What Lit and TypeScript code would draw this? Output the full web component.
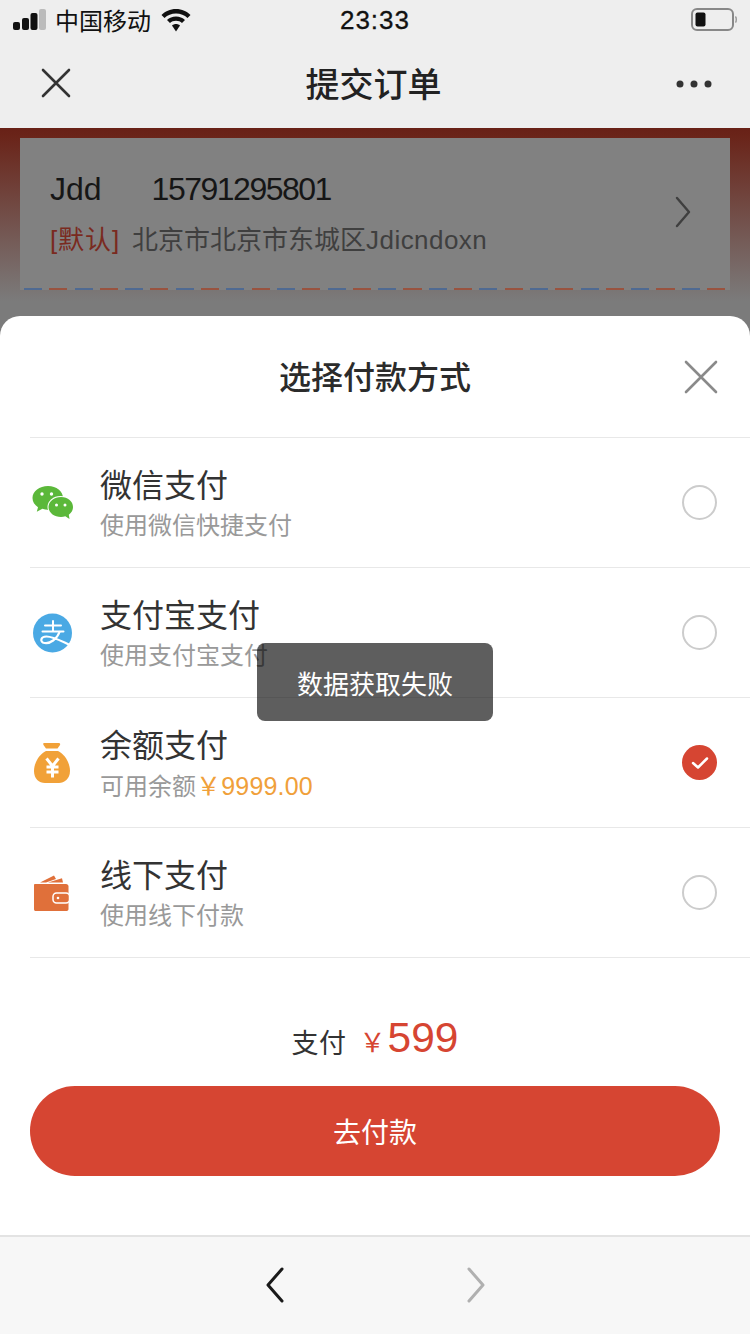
import { LitElement, html, css, svg } from "lit";
import { customElement } from "lit/decorators.js";

const rows = [
  { key: "wx", title: "微信支付", sub: "使用微信快捷支付", on: false },
  { key: "ali", title: "支付宝支付", sub: "使用支付宝支付", on: false },
  { key: "bal", title: "余额支付", sub: "可用余额", amount: "￥9999.00", on: true },
  { key: "off", title: "线下支付", sub: "使用线下付款", on: false },
];

const icons: Record<string, unknown> = {
  wx: html`<svg width="44" height="36" viewBox="0 0 44 36">
    <path fill="#5bb83a" d="M18 1C9.500 1 2.500 6.400 2.500 13c0 3.700 2.100 7 5.500 9.200L6.800 26.800 12.400 23.800C14.200 24.500 16 24.800 18 24.800 26.500 24.800 33 19.500 33 13 33 6.400 26.500 1 18 1Z"/>
    <ellipse cx="30.500" cy="22" rx="13" ry="11" fill="#fff"/>
    <path fill="#5bb83a" d="M31 12C24 12 18.500 16.500 18.500 22S24 32 31 32C32.500 32 34 31.800 35.300 31.300L39.500 34 38.800 29.800C41.500 27.800 43 25 43 22 43 16.500 38 12 31 12Z"/>
    <circle cx="12" cy="9" r="1.700" fill="#fff"/><circle cx="21.500" cy="9" r="1.700" fill="#fff"/>
    <circle cx="26.500" cy="20" r="1.500" fill="#fff"/><circle cx="35" cy="20" r="1.500" fill="#fff"/>
  </svg>`,
  ali: html`<svg width="40" height="40" viewBox="0 0 40 40">
    <circle cx="19.500" cy="20" r="19.500" fill="#4aa9e4"/>
    <path fill="none" stroke="#fff" stroke-width="2" stroke-linecap="round" d="M12 12.500H28M20 8V18.500M9.500 18.500H30.500"/>
    <path fill="none" stroke="#fff" stroke-width="2.200" stroke-linecap="round" d="M26.500 19C24 26 17 31 11.500 30 6.500 29 7.500 23.500 13.500 23.500 20 23.500 28 28 37 32"/>
  </svg>`,
  bal: html`<svg width="38" height="42" viewBox="0 0 38 42">
    <path fill="#f1a138" d="M11 1H26C27 1 27.500 2 27 3L24.500 6.500H13L10.500 3C10 2 10 1 11 1Z"/>
    <path fill="#f1a138" d="M13 9H25C32 12.500 37 21 37 29 37 37 31 41 26 41H12C6 41 1 37 1 29 1 21 6 12.500 13 9Z"/>
    <path fill="none" stroke="#fff" stroke-width="3" d="M13.500 16.500L19.500 24 25.500 16.500M19.500 24V35.500M13.500 25H25.500M13.500 30H25.500"/>
  </svg>`,
  off: html`<svg width="38" height="38" viewBox="0 0 38 38">
    <path fill="#e0703a" d="M7 8.500L21 1.500 23 5 13 8.500ZM15 8.500L29 4.200 30 8.500Z"/>
    <path fill="#e0703a" d="M2 10H33C34.500 10 35.500 11 35.500 12.500V35C35.500 36.500 34.500 37 33 37H3C1.500 37 1 36.500 1 35V11C1 10.500 1.500 10 2 10Z"/>
    <rect x="20" y="19" width="16.500" height="10" rx="3.500" fill="#e0703a" stroke="#fff" stroke-width="1.500"/>
    <circle cx="25" cy="24" r="1.300" fill="#fff"/>
  </svg>`,
};

const ch = (d: string, color: string, w = 2.6) =>
  svg`<path d=${d} fill="none" stroke=${color} stroke-width=${w} stroke-linecap="round" stroke-linejoin="round"/>`;

@customElement("app-root")
export class AppRoot extends LitElement {
  static styles = css`
    :host {
      display: flex;
      flex-direction: column;
      position: relative;
      width: 750px;
      height: 1334px;
      overflow: hidden;
      background: #fff;
      font-family: "Liberation Sans", "Noto Sans CJK SC", sans-serif;
    }
    svg { display: block; flex: none; }
    .top { height: 128px; background: #eeeeee; flex: none; }
    .status {
      height: 40px;
      display: grid;
      grid-template-columns: 1fr auto 1fr;
      align-items: center;
      padding: 0 13px;
      color: #111;
    }
    .status-left { display: flex; align-items: center; gap: 9px; font-size: 24px; }
    .carrier { margin-top: -2px; }
    .signal { margin-top: -2px; }
    .wifi { margin-left: 1px; }
    .status-time { font-size: 26px; letter-spacing: 1px; -webkit-text-stroke: 0.3px #111; margin-top: 1px; }
    .status-right { justify-self: end; }
    .nav {
      height: 88px;
      display: flex;
      align-items: center;
      justify-content: space-between;
      padding: 0 38px 4px 41px;
      box-sizing: border-box;
    }
    .nav-title { font-size: 34px; font-weight: 500; color: #222; }
    .nav-x { margin-top: 2px; }
    .nav-more { margin-top: 4px; }
    .back {
      flex: none;
      height: 188px;
      box-sizing: border-box;
      padding: 10px 20px 0;
      background: linear-gradient(180deg, #682117 0%, #6a2419 4%, #7b7b7b 92%, #7b7b7b 100%);
    }
    .addr {
      height: 152px;
      box-sizing: border-box;
      background: #818181;
      padding: 33px 39px 0 30px;
      position: relative;
      display: flex;
      justify-content: space-between;
      align-items: flex-start;
    }
    .addr-line1 { font-size: 32px; color: #161616; display: flex; gap: 50px; line-height: 36px; }
    .phone { letter-spacing: -1.5px; }
    .addr-line2 { font-size: 26px; color: #3f3f3f; margin-top: 15px; line-height: 36px; display: flex; gap: 12px; }
    .addr-line2 .def { color: #7a2a20; letter-spacing: 0.9px; }
    .latin { letter-spacing: 0.45px; }
    .addr-arrow { margin-top: 25px; }
    .mail {
      position: absolute;
      left: 4px;
      right: 0;
      bottom: 0;
      height: 2px;
      background: repeating-linear-gradient(90deg, #4f6a92 0 18px, transparent 18px 25.3px, #99533f 25.3px 43.3px, transparent 43.3px 50.6px);
    }
    .sheet-wrap { flex: 1; background: #7b7b7b; display: flex; }
    .sheet {
      flex: 1;
      background: #fff;
      border-radius: 20px 20px 0 0;
      display: flex;
      flex-direction: column;
      min-width: 0;
    }
    .sheet-head {
      height: 121px;
      flex: none;
      display: flex;
      align-items: center;
      justify-content: center;
      position: relative;
      box-sizing: border-box;
      padding-bottom: 4px;
    }
    .sheet-title { font-size: 32px; font-weight: 500; color: #2b2b2b; }
    .sheet-close { position: absolute; right: 31px; top: 43px; }
    .list { margin-left: 30px; flex: none; }
    .row {
      height: 130px;
      box-sizing: border-box;
      border-top: 1px solid #e8e8e8;
      display: flex;
      align-items: center;
      padding-right: 33px;
    }
    .row:last-child { border-bottom: 1px solid #e8e8e8; height: 131px; }
    .ico { width: 70px; box-sizing: border-box; padding-left: 3px; display: flex; align-items: center; flex: none; }
    .ico.wx { padding-left: 0; }
    .text { flex: 1; padding-top: 2px; }
    .t1 { font-size: 32px; line-height: 40px; color: #333; }
    .t2 { font-size: 24px; line-height: 30px; color: #999; margin-top: 5px; }
    .amount { color: #f0a03a; font-size: 25px; letter-spacing: 0.2px; }
    .radio { width: 35px; height: 35px; box-sizing: border-box; border-radius: 50%; border: 2px solid #cccccc; flex: none; }
    .radio.on { border: none; background: #d64532; display: flex; align-items: center; justify-content: center; }
    .pay { flex: none; margin-top: 56px; height: 72px; display: flex; align-items: baseline; justify-content: center; color: #333; font-size: 27px; }
    .pay .lbl { letter-spacing: 0.5px; position: relative; top: 1px; }
    .pay .yen { color: #d64532; font-size: 26px; margin-left: 13px; }
    .pay .num { color: #d64532; font-size: 42.5px; margin-left: 2px; }
    .btn {
      flex: none;
      margin: 0 30px;
      height: 90px;
      border-radius: 45px;
      background: #d64532;
      color: #fff;
      font-size: 28px;
      display: flex;
      align-items: center;
      justify-content: center;
    }
    .bottom {
      flex: none;
      height: 99px;
      box-sizing: border-box;
      border-top: 2px solid #e3e3e3;
      background: #f7f7f7;
      display: flex;
      align-items: center;
      justify-content: center;
      gap: 181px;
      padding-bottom: 2px;
    }
    .toast {
      position: absolute;
      left: 257px;
      top: 643px;
      width: 236px;
      height: 78px;
      border-radius: 8px;
      background: rgba(0, 0, 0, 0.63);
      color: #fff;
      font-size: 26px;
      display: flex;
      align-items: center;
      justify-content: center;
    }
  `;

  render() {
    return html`
      <div class="top">
        <div class="status">
          <div class="status-left">
            <svg class="signal" width="33" height="22" viewBox="0 0 33 22">
              <rect x="0" y="14" width="7" height="8" rx="2" fill="#111"/>
              <rect x="9" y="10" width="7" height="12" rx="2" fill="#111"/>
              <rect x="17.500" y="5" width="7" height="17" rx="2" fill="#111"/>
              <rect x="26" y="1" width="7" height="21" rx="2" fill="#bbb"/>
            </svg>
            <span class="carrier">中国移动</span>
            <svg class="wifi" width="30" height="23" viewBox="0 0 30 23">
              <path fill="#111" d="M15 0C9 0 4 2.500 0.500 6L3.500 9C6.500 6.200 10.500 4.500 15 4.500S23.500 6.200 26.500 9L29.500 6C26 2.500 21 0 15 0Z"/>
              <path fill="#111" d="M15 7.500C11.500 7.500 8.200 9 6 11L9 14C10.500 12.600 12.600 11.800 15 11.800S19.500 12.600 21 14L24 11C21.800 9 18.500 7.500 15 7.500Z"/>
              <path fill="#111" d="M15 15C13.500 15 12.200 15.500 11 16.500L15 22.500 19 16.500C17.800 15.500 16.500 15 15 15Z"/>
            </svg>
          </div>
          <div class="status-time">23:33</div>
          <div class="status-right">
            <svg width="46" height="24" viewBox="0 0 46 24">
              <rect x="1" y="1" width="41" height="21" rx="5" fill="none" stroke="#888" stroke-width="2"/>
              <rect x="4.500" y="4.500" width="10" height="14" rx="2" fill="#111"/>
              <path d="M44.500 8.500C45.500 9.500 45.500 13.500 44.500 14.500" fill="none" stroke="#888" stroke-width="1.200"/>
            </svg>
          </div>
        </div>
        <div class="nav">
          <svg class="nav-x" width="30" height="30" viewBox="0 0 30 30">${ch("M2 2L28 28M28 2L2 28", "#333", 2.6)}</svg>
          <div class="nav-title">提交订单</div>
          <svg class="nav-more" width="36" height="10" viewBox="0 0 36 10">
            <circle cx="4" cy="5" r="3.500" fill="#333"/><circle cx="18" cy="5" r="3.500" fill="#333"/><circle cx="32" cy="5" r="3.500" fill="#333"/>
          </svg>
        </div>
      </div>
      <div class="back">
        <div class="addr">
          <div>
            <div class="addr-line1"><span>Jdd</span><span class="phone">15791295801</span></div>
            <div class="addr-line2"><span class="def">[默认]</span><span>北京市北京市东城区<span class="latin">Jdicndoxn</span></span></div>
          </div>
          <svg class="addr-arrow" width="16" height="32" viewBox="0 0 16 32">${ch("M2 2L14 16L2 30", "#3f3f3f", 2.4)}</svg>
          <div class="mail"></div>
        </div>
      </div>
      <div class="sheet-wrap">
        <div class="sheet">
          <div class="sheet-head">
            <div class="sheet-title">选择付款方式</div>
            <svg class="sheet-close" width="36" height="36" viewBox="0 0 36 36">${ch("M3 3L33 33M33 3L3 33", "#8a8a8a", 2.6)}</svg>
          </div>
          <div class="list">
            ${rows.map(
              (r) => html`
                <div class="row">
                  <div class="ico ${r.key}">${icons[r.key]}</div>
                  <div class="text">
                    <div class="t1">${r.title}</div>
                    <div class="t2">${r.sub}${r.amount ? html`<span class="amount">${r.amount}</span>` : ""}</div>
                  </div>
                  ${r.on
                    ? html`<div class="radio on"><svg width="20" height="16" viewBox="0 0 20 16">${ch("M3 8L8 12.500L17 3.500", "#fff", 2.5)}</svg></div>`
                    : html`<div class="radio"></div>`}
                </div>
              `
            )}
          </div>
          <div class="pay"><span class="lbl">支付</span><span class="yen">￥</span><span class="num">599</span></div>
          <div class="btn">去付款</div>
        </div>
      </div>
      <div class="bottom">
        <svg width="20" height="36" viewBox="0 0 20 36">${ch("M17 2L3 18L17 34", "#1a1a1a", 3)}</svg>
        <svg width="20" height="36" viewBox="0 0 20 36">${ch("M3 2L17 18L3 34", "#b0b0b0", 3)}</svg>
      </div>
      <div class="toast">数据获取失败</div>
    `;
  }
}
